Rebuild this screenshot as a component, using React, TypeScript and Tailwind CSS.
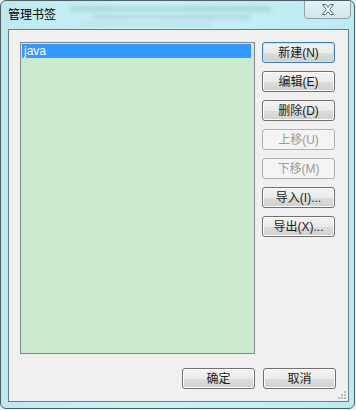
import React from "react";

type Btn = { label: string; disabled?: boolean; isDefault?: boolean };

const SIDE_BUTTONS: Btn[] = [
  { label: "新建(N)", isDefault: true },
  { label: "编辑(E)" },
  { label: "删除(D)" },
  { label: "上移(U)", disabled: true },
  { label: "下移(M)", disabled: true },
  { label: "导入(I)..." },
  { label: "导出(X)..." },
];

const FONT = { fontFamily: '"Liberation Sans", "Noto Sans CJK SC", sans-serif' };

function WinButton({ label, disabled, isDefault }: Btn) {
  const base =
    "h-[21px] w-[73px] rounded-[3px] border text-[12px] leading-none flex items-center justify-center";
  if (disabled) {
    return (
      <div className={`${base} border-[#adb2b5] bg-[#f4f4f4] text-[#9a9a9a]`}>
        {label}
      </div>
    );
  }
  return (
    <div
      className={`${base} ${
        isDefault ? "border-[#3c7fb1] shadow-[inset_0_0_0_1px_#bde4f7]" : "border-[#707070] shadow-[inset_0_0_0_1px_#fcfcfc]"
      } bg-[linear-gradient(#f2f2f2_0%,#ebebeb_50%,#dddddd_51%,#cfcfcf_100%)] text-[#1a1a1a]`}
    >
      {label}
    </div>
  );
}

function CloseGlyph() {
  return (
    <svg width="14" height="11" viewBox="0 0 14 11">
      <path
        d="M1.5 0.5 H4.5 L7 3.3 L9.5 0.5 H12.5 L8.7 5.5 L12.5 10.5 H9.5 L7 7.7 L4.5 10.5 H1.5 L5.3 5.5 Z"
        fill="#ffffff"
        stroke="#55656a"
        strokeWidth="1"
        strokeLinejoin="round"
      />
    </svg>
  );
}

export default function App() {
  return (
    <div className="w-[356px] h-[410px] bg-[#e9f3f5] overflow-hidden" style={FONT}>
      <div className="relative w-[355px] h-[409px] rounded-[6px] border border-[#4a6066] bg-[linear-gradient(90deg,#bfe9ef,#c9f2f7_40%,#c2eef4_70%,#bdeaf0)] overflow-hidden flex flex-col">
        {/* blurred glass streaks */}
        <div className="absolute left-[70px] top-[6px] w-[200px] h-[4px] bg-[#7fa3ab] opacity-40 blur-[2px]" />
        <div className="absolute left-[90px] top-[14px] w-[160px] h-[4px] bg-[#8fb3ba] opacity-40 blur-[2px]" />
        <div className="absolute left-[80px] top-[22px] w-[130px] h-[3px] bg-[#9cc0c6] opacity-40 blur-[2px]" />

        {/* title bar */}
        <div className="relative h-[28px] flex items-center pl-[7px] shrink-0">
          <span className="text-[12px] text-black leading-none">管理书签</span>
          <div className="absolute right-[3px] top-[-1px] w-[47px] h-[19px] rounded-b-[4px] border border-[#8ea2a7] bg-[linear-gradient(#e4f3f5,#cfe6ea)] flex items-center justify-center">
            <CloseGlyph />
          </div>
        </div>

        {/* client area */}
        <div className="relative ml-[7px] mr-[5px] mb-[6px] flex-1 border border-[#687f85] bg-[#f0f0f0] flex flex-col pt-[12px] pl-[11px] pr-[12px] pb-[12px]">
          <div className="flex gap-[7px]">
            <div className="w-[235px] h-[312px] border border-[#828790] bg-[#cbe9cd] p-[1px] pr-[3px]">
              <div className="h-[14px] bg-[#3399ff] text-white text-[12px] leading-[14px] pl-[2px]">java</div>
            </div>
            <div className="flex flex-col gap-[8px]">
              {SIDE_BUTTONS.map((b) => (
                <WinButton key={b.label} {...b} />
              ))}
            </div>
          </div>
          <div className="mt-[14px] flex justify-end gap-[8px]">
            <WinButton label="确定" />
            <WinButton label="取消" />
          </div>

          {/* size grip */}
          <div className="absolute right-[2px] bottom-[2px] grid grid-cols-3 gap-[1px]">
            {[0, 0, 1, 0, 1, 1, 1, 1, 1].map((v, i) => (
              <span key={i} className={`w-[2px] h-[2px] ${v ? "bg-[#b8bcbf]" : "bg-transparent"}`} />
            ))}
          </div>
        </div>
      </div>
    </div>
  );
}
